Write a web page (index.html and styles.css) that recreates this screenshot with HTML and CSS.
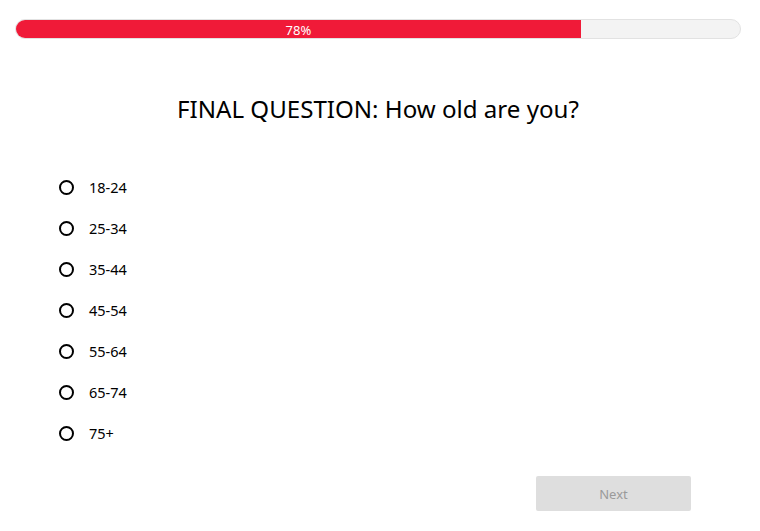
FILE: index.html
```html
<!DOCTYPE html>
<html>
<head>
<meta charset="utf-8">
<link rel="stylesheet" href="styles.css">
</head>
<body>
<div class="page">
  <div class="progress">
    <div class="progress-fill" style="width:78%">78%</div>
  </div>
  <h1 class="title">FINAL QUESTION: How old are you?</h1>
  <ul class="options">
    <li class="option"><span class="radio"></span><span class="label">18-24</span></li>
    <li class="option"><span class="radio"></span><span class="label">25-34</span></li>
    <li class="option"><span class="radio"></span><span class="label">35-44</span></li>
    <li class="option"><span class="radio"></span><span class="label">45-54</span></li>
    <li class="option"><span class="radio"></span><span class="label">55-64</span></li>
    <li class="option"><span class="radio"></span><span class="label">65-74</span></li>
    <li class="option"><span class="radio"></span><span class="label">75+</span></li>
  </ul>
  <div class="actions">
    <button class="next" disabled>Next</button>
  </div>
</div>
</body>
</html>
```
FILE: styles.css
```css
* { box-sizing: border-box; }
html, body { margin: 0; padding: 0; background: #fff; }
body { font-family: "Noto Sans", "Open Sans", sans-serif; color: #000; }
.page { padding: 19px 19px 0 15px; }
.progress {
  height: 20px;
  background: #f3f3f3;
  border: 1px solid #e2e2e2;
  border-radius: 10px;
  overflow: hidden;
}
.progress-fill {
  height: 100%;
  background: #f01a38;
  color: #fff;
  font-size: 13px;
  line-height: 20px;
  text-align: center;
}
.title {
  margin: 53px 0 0;
  font-size: 24.1px;
  font-weight: 400;
  text-align: center;
  line-height: 33px;
}
.options {
  list-style: none;
  margin: 51px 0 0;
  padding: 0 0 0 44px;
  display: flex;
  flex-direction: column;
  gap: 19px;
}
.option {
  display: flex;
  align-items: center;
  height: 22px;
}
.radio {
  width: 15px;
  height: 15px;
  border: 2px solid #000;
  border-radius: 50%;
  margin-right: 15px;
}
.label { font-size: 14.5px; }
.actions {
  display: flex;
  justify-content: flex-end;
  padding-right: 50px;
  margin-top: 32px;
}
.next {
  width: 155px;
  height: 35px;
  border: none;
  border-radius: 2px;
  background: #dedede;
  color: #9a9a9a;
  font-family: "Noto Sans", "Open Sans", sans-serif;
  font-size: 13px;
}
```
